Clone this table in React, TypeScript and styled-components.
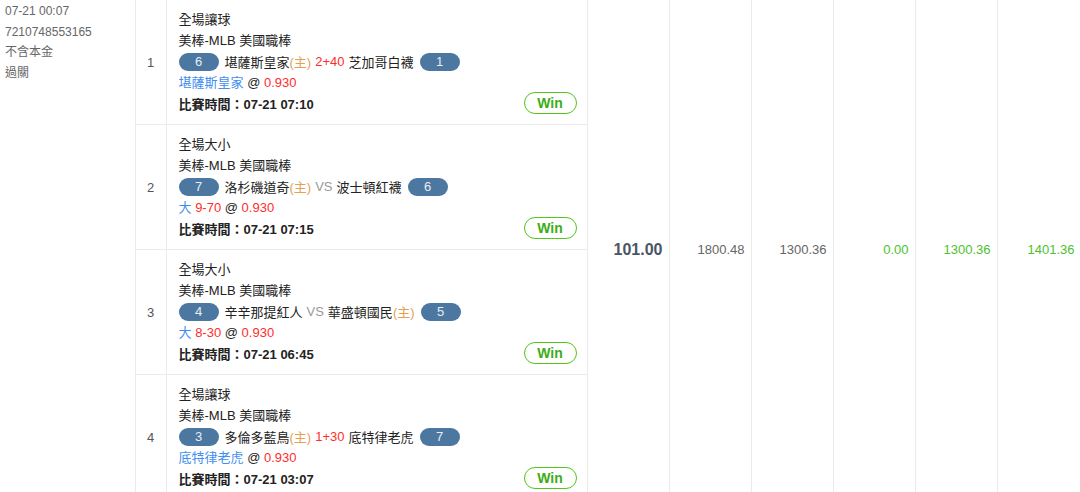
import React from "react";
import { createGlobalStyle, styled } from "styled-components";

type Leg = {
  market: string;
  league: string;
  homeScore: string;
  home: string;
  homeFirst: boolean;
  line: string | null;
  away: string;
  awayScore: string;
  pick: string;
  pickLine?: string;
  odds: string;
  time: string;
};

const legs: Leg[] = [
  {
    market: "全場讓球",
    league: "美棒-MLB 美國職棒",
    homeScore: "6",
    home: "堪薩斯皇家",
    homeFirst: true,
    line: "2+40",
    away: "芝加哥白襪",
    awayScore: "1",
    pick: "堪薩斯皇家",
    odds: "0.930",
    time: "07-21 07:10",
  },
  {
    market: "全場大小",
    league: "美棒-MLB 美國職棒",
    homeScore: "7",
    home: "洛杉磯道奇",
    homeFirst: true,
    line: null,
    away: "波士頓紅襪",
    awayScore: "6",
    pick: "大",
    pickLine: "9-70",
    odds: "0.930",
    time: "07-21 07:15",
  },
  {
    market: "全場大小",
    league: "美棒-MLB 美國職棒",
    homeScore: "4",
    home: "辛辛那提紅人",
    homeFirst: false,
    line: null,
    away: "華盛頓國民",
    awayScore: "5",
    pick: "大",
    pickLine: "8-30",
    odds: "0.930",
    time: "07-21 06:45",
  },
  {
    market: "全場讓球",
    league: "美棒-MLB 美國職棒",
    homeScore: "3",
    home: "多倫多藍鳥",
    homeFirst: true,
    line: "1+30",
    away: "底特律老虎",
    awayScore: "7",
    pick: "底特律老虎",
    odds: "0.930",
    time: "07-21 03:07",
  },
];

const GlobalStyle = createGlobalStyle`
  body {
    margin: 0;
    background: #fff;
    font-family: "Liberation Sans", "Noto Sans CJK TC", sans-serif;
    overflow: hidden;
  }
`;

const Table = styled.table`
  border-collapse: collapse;
  table-layout: fixed;
  width: 1081px;
  margin-top: -1px;
`;

const Cell = styled.td`
  border: 1px solid #ebebeb;
  vertical-align: middle;
  padding: 0;
`;

const InfoCell = styled(Cell)`
  border-left: none;
  vertical-align: top;
  padding: 1px 5px;
  font-size: 12px;
  line-height: 20.5px;
  color: #666;
`;

const IndexCell = styled(Cell)`
  text-align: center;
  font-size: 13px;
  color: #555;
`;

const DetailCell = styled(Cell)`
  padding: 9px 10px 10px 12px;
  font-size: 13px;
  color: #222;
  height: 105px;
`;

const Line = styled.div`
  line-height: 21px;
  white-space: nowrap;
`;

const TeamLine = styled.div`
  display: flex;
  align-items: center;
  gap: 4px;
  height: 21px;
  white-space: nowrap;
`;

const Badge = styled.span`
  display: inline-flex;
  align-items: center;
  justify-content: center;
  width: 40px;
  height: 18px;
  margin: 0 2px;
  border-radius: 9px;
  background: #4c77a1;
  color: #e6edf4;
  font-size: 13px;

  &:first-child {
    margin-left: 0;
  }
`;

const Home = styled.span`
  color: #e3a153;
`;

const Red = styled.span`
  color: #ff2d2d;
`;

const Blue = styled.span`
  color: #3f8ef0;
`;

const Vs = styled.span`
  color: #999;
`;

const TimeLine = styled.div`
  display: flex;
  align-items: center;
  justify-content: space-between;
  height: 21px;
  font-weight: bold;
  white-space: nowrap;
`;

const WinTag = styled.span`
  box-sizing: border-box;
  display: inline-flex;
  align-items: center;
  justify-content: center;
  width: 53px;
  height: 22px;
  margin-top: -2px;
  border: 1px solid #52c41a;
  border-radius: 11px;
  color: #3bad16;
  font-size: 14px;
  font-weight: bold;
`;

const AmountCell = styled(Cell)<{ $tone?: "bold" | "plain" | "green" }>`
  text-align: right;
  padding-right: 6px;
  font-size: ${(p) => (p.$tone === "bold" ? "16px" : "13px")};
  font-weight: ${(p) => (p.$tone === "bold" ? "bold" : "normal")};
  color: ${(p) =>
    p.$tone === "bold" ? "#4a5565" : p.$tone === "green" ? "#4cc22e" : "#666"};
`;

const LegDetail = ({ leg }: { leg: Leg }) => (
  <DetailCell>
    <Line>{leg.market}</Line>
    <Line>{leg.league}</Line>
    <TeamLine>
      <Badge>{leg.homeScore}</Badge>
      {leg.homeFirst ? (
        <span>
          {leg.home}
          <Home>(主)</Home>
        </span>
      ) : (
        <span>{leg.home}</span>
      )}
      {leg.line ? <Red>{leg.line}</Red> : <Vs>VS</Vs>}
      {leg.homeFirst ? (
        <span>{leg.away}</span>
      ) : (
        <span>
          {leg.away}
          <Home>(主)</Home>
        </span>
      )}
      <Badge>{leg.awayScore}</Badge>
    </TeamLine>
    <Line>
      <Blue>{leg.pick}</Blue>
      {leg.pickLine && <Red> {leg.pickLine}</Red>} @ <Red>{leg.odds}</Red>
    </Line>
    <TimeLine>
      <span>比賽時間：{leg.time}</span>
      <WinTag>Win</WinTag>
    </TimeLine>
  </DetailCell>
);

export default function App() {
  return (
    <>
      <GlobalStyle />
      <Table>
        <colgroup>
          <col style={{ width: 135 }} />
          <col style={{ width: 31 }} />
          <col style={{ width: 421 }} />
          <col style={{ width: 82 }} />
          <col style={{ width: 82 }} />
          <col style={{ width: 82 }} />
          <col style={{ width: 82 }} />
          <col style={{ width: 82 }} />
          <col style={{ width: 84 }} />
        </colgroup>
        <tbody>
          {legs.map((leg, i) => (
            <tr key={i}>
              {i === 0 && (
                <InfoCell rowSpan={legs.length}>
                  <div>07-21 00:07</div>
                  <div>7210748553165</div>
                  <div>不含本金</div>
                  <div>過關</div>
                </InfoCell>
              )}
              <IndexCell>{i + 1}</IndexCell>
              <LegDetail leg={leg} />
              {i === 0 && (
                <>
                  <AmountCell rowSpan={legs.length} $tone="bold">101.00</AmountCell>
                  <AmountCell rowSpan={legs.length}>1800.48</AmountCell>
                  <AmountCell rowSpan={legs.length}>1300.36</AmountCell>
                  <AmountCell rowSpan={legs.length} $tone="green">0.00</AmountCell>
                  <AmountCell rowSpan={legs.length} $tone="green">1300.36</AmountCell>
                  <AmountCell rowSpan={legs.length} $tone="green">1401.36</AmountCell>
                </>
              )}
            </tr>
          ))}
        </tbody>
      </Table>
    </>
  );
}
